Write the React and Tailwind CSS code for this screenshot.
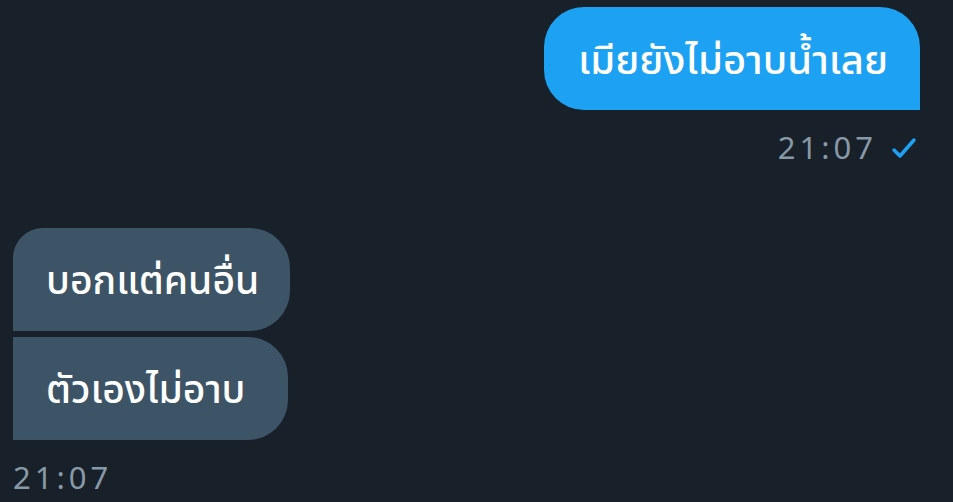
export default function App() {
  return (
    <div
      className="w-[953px] h-[502px] bg-[#18202a] overflow-hidden flex flex-col"
      style={{ fontFamily: '"Noto Sans", "Noto Sans Thai", "Noto Sans CJK SC", sans-serif' }}
    >
      <div className="flex justify-end pr-[33px] pt-[7px]">
        <div className="h-[103px] w-[376px] bg-[#1da1f2] rounded-tl-[40px] rounded-tr-[40px] rounded-bl-[40px] flex items-center justify-center pl-[2px] text-white text-[40px] font-medium whitespace-nowrap">
          เมียยังไม่อาบน้ำเลย
        </div>
      </div>
      <div className="flex justify-end items-center pr-[36px] mt-[22px] gap-[14px] text-[#8899a6] text-[31px] leading-none">
        <span className="tracking-[4px]">21:07</span>
        <svg width="26" height="22" viewBox="0 0 26 22" fill="none">
          <path d="M3 13 L9 19 L23 3" stroke="#1da1f2" strokeWidth="3.5" strokeLinecap="round" strokeLinejoin="round" />
        </svg>
      </div>
      <div className="flex flex-col items-start pl-[13px] mt-[65px] gap-[6px]">
        <div className="h-[103px] w-[277px] bg-[#3d5466] rounded-tl-[30px] rounded-tr-[40px] rounded-br-[40px] flex items-center pl-[33px] text-white text-[39px] font-medium whitespace-nowrap">
          บอกแต่คนอื่น
        </div>
        <div className="h-[103px] w-[275px] bg-[#3d5466] rounded-tr-[40px] rounded-br-[40px] flex items-center pl-[33px] text-white text-[39px] font-medium whitespace-nowrap">
          ตัวเองไม่อาบ
        </div>
      </div>
      <div className="pl-[13px] mt-[22px] text-[#8899a6] text-[31px] leading-none tracking-[4px]">21:07</div>
    </div>
  );
}
